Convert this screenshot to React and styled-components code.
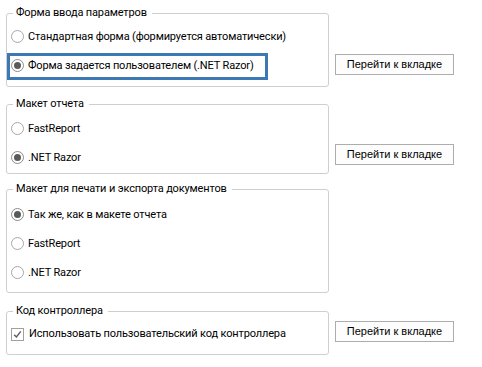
import React from "react";
import styled, { createGlobalStyle } from "styled-components";

const Global = createGlobalStyle`
  html, body { margin: 0; padding: 0; background: #ffffff; }
  body { font-family: Roboto, "Segoe UI", sans-serif; color: #000; }
`;

const Page = styled.div`
  width: 482px;
  height: 367px;
  box-sizing: border-box;
  padding: 5px 0 0 6px;
  background: #fff;
  overflow: hidden;
`;

const Section = styled.div`
  display: flex;
  align-items: flex-start;
  gap: 6px;
  margin-top: ${(p) => p.$top || 0}px;
`;

const Group = styled.fieldset`
  margin: 0;
  width: 323px;
  box-sizing: border-box;
  border: 1px solid #cfcfcf;
  border-radius: 3px;
  padding: ${(p) => p.$pt}px 4px ${(p) => p.$pb}px 4px;
  min-inline-size: 0;
`;

const Legend = styled.legend`
  font-size: 11px;
  line-height: 16px;
  letter-spacing: -0.15px;
  padding: 0 5px 0 3px;
  margin-left: 2px;
  color: #000;
`;

const Row = styled.label`
  position: relative;
  display: flex;
  align-items: center;
  height: ${(p) => p.$h || 29}px;
  font-size: 11px;
  line-height: 16px;
  letter-spacing: -0.15px;
  color: #000;
  white-space: nowrap;
`;

const Highlight = styled.span`
  position: absolute;
  left: -4px;
  top: 2px;
  width: 261px;
  height: 27px;
  box-sizing: border-box;
  border: 3px solid #3b78b4;
  pointer-events: none;
`;

const RadioMark = styled.span`
  position: relative;
  flex: none;
  width: 13px;
  height: 13px;
  box-sizing: border-box;
  border-radius: 50%;
  border: 1px solid ${(p) => (p.$checked ? "#8c8c8c" : "#a8a8a8")};
  background: #fff;
  margin-right: 4px;
  &::after {
    content: "";
    display: ${(p) => (p.$checked ? "block" : "none")};
    position: absolute;
    left: 2px;
    top: 2px;
    width: 7px;
    height: 7px;
    border-radius: 50%;
    background: #5a5a5a;
  }
`;

const CheckMark = styled.span`
  flex: none;
  width: 13px;
  height: 13px;
  box-sizing: border-box;
  border: 1px solid #a0a0a0;
  background: #fff;
  margin-right: 5px;
  display: flex;
  align-items: center;
  justify-content: center;
`;

const ButtonSlot = styled.div`
  padding-top: ${(p) => p.$top}px;
`;

const GoButton = styled.button`
  width: 119px;
  height: 21px;
  box-sizing: border-box;
  border: 1px solid #adadad;
  background: #fdfdfd;
  font-family: "Liberation Sans", Tahoma, sans-serif;
  font-size: 11px;
  color: #000;
  padding: 0;
  cursor: pointer;
`;

function Radio({ label, checked, highlight }) {
  return (
    <Row>
      {highlight && <Highlight />}
      <RadioMark $checked={checked} />
      {label}
    </Row>
  );
}

function Check({ label }) {
  return (
    <Row $h={24}>
      <CheckMark>
        <svg width="9" height="9" viewBox="0 0 9 9">
          <path d="M1.2 4.8 L3.4 7 L7.8 1.4" fill="none" stroke="#5c5c5c" strokeWidth="1.4" />
        </svg>
      </CheckMark>
      {label}
    </Row>
  );
}

export default function App() {
  return (
    <Page>
      <Global />
      <Section>
        <Group $pt={1} $pb={6}>
          <Legend>Форма ввода параметров</Legend>
          <Radio label="Стандартная форма (формируется автоматически)" />
          <Radio label="Форма задается пользователем (.NET Razor)" checked highlight />
        </Group>
        <ButtonSlot $top={48}>
          <GoButton>Перейти к вкладке</GoButton>
        </ButtonSlot>
      </Section>
      <Section $top={9}>
        <Group $pt={2} $pb={1}>
          <Legend>Макет отчета</Legend>
          <Radio label="FastReport" />
          <Radio label=".NET Razor" checked />
        </Group>
        <ButtonSlot $top={47}>
          <GoButton>Перейти к вкладке</GoButton>
        </ButtonSlot>
      </Section>
      <Section $top={7}>
        <Group $pt={3} $pb={5}>
          <Legend>Макет для печати и экспорта документов</Legend>
          <Radio label="Так же, как в макете отчета" checked />
          <Radio label="FastReport" />
          <Radio label=".NET Razor" />
        </Group>
      </Section>
      <Section $top={10}>
        <Group $pt={3} $pb={8}>
          <Legend>Код контроллера</Legend>
          <Check label="Использовать пользовательский код контроллера" />
        </Group>
        <ButtonSlot $top={17}>
          <GoButton>Перейти к вкладке</GoButton>
        </ButtonSlot>
      </Section>
    </Page>
  );
}
